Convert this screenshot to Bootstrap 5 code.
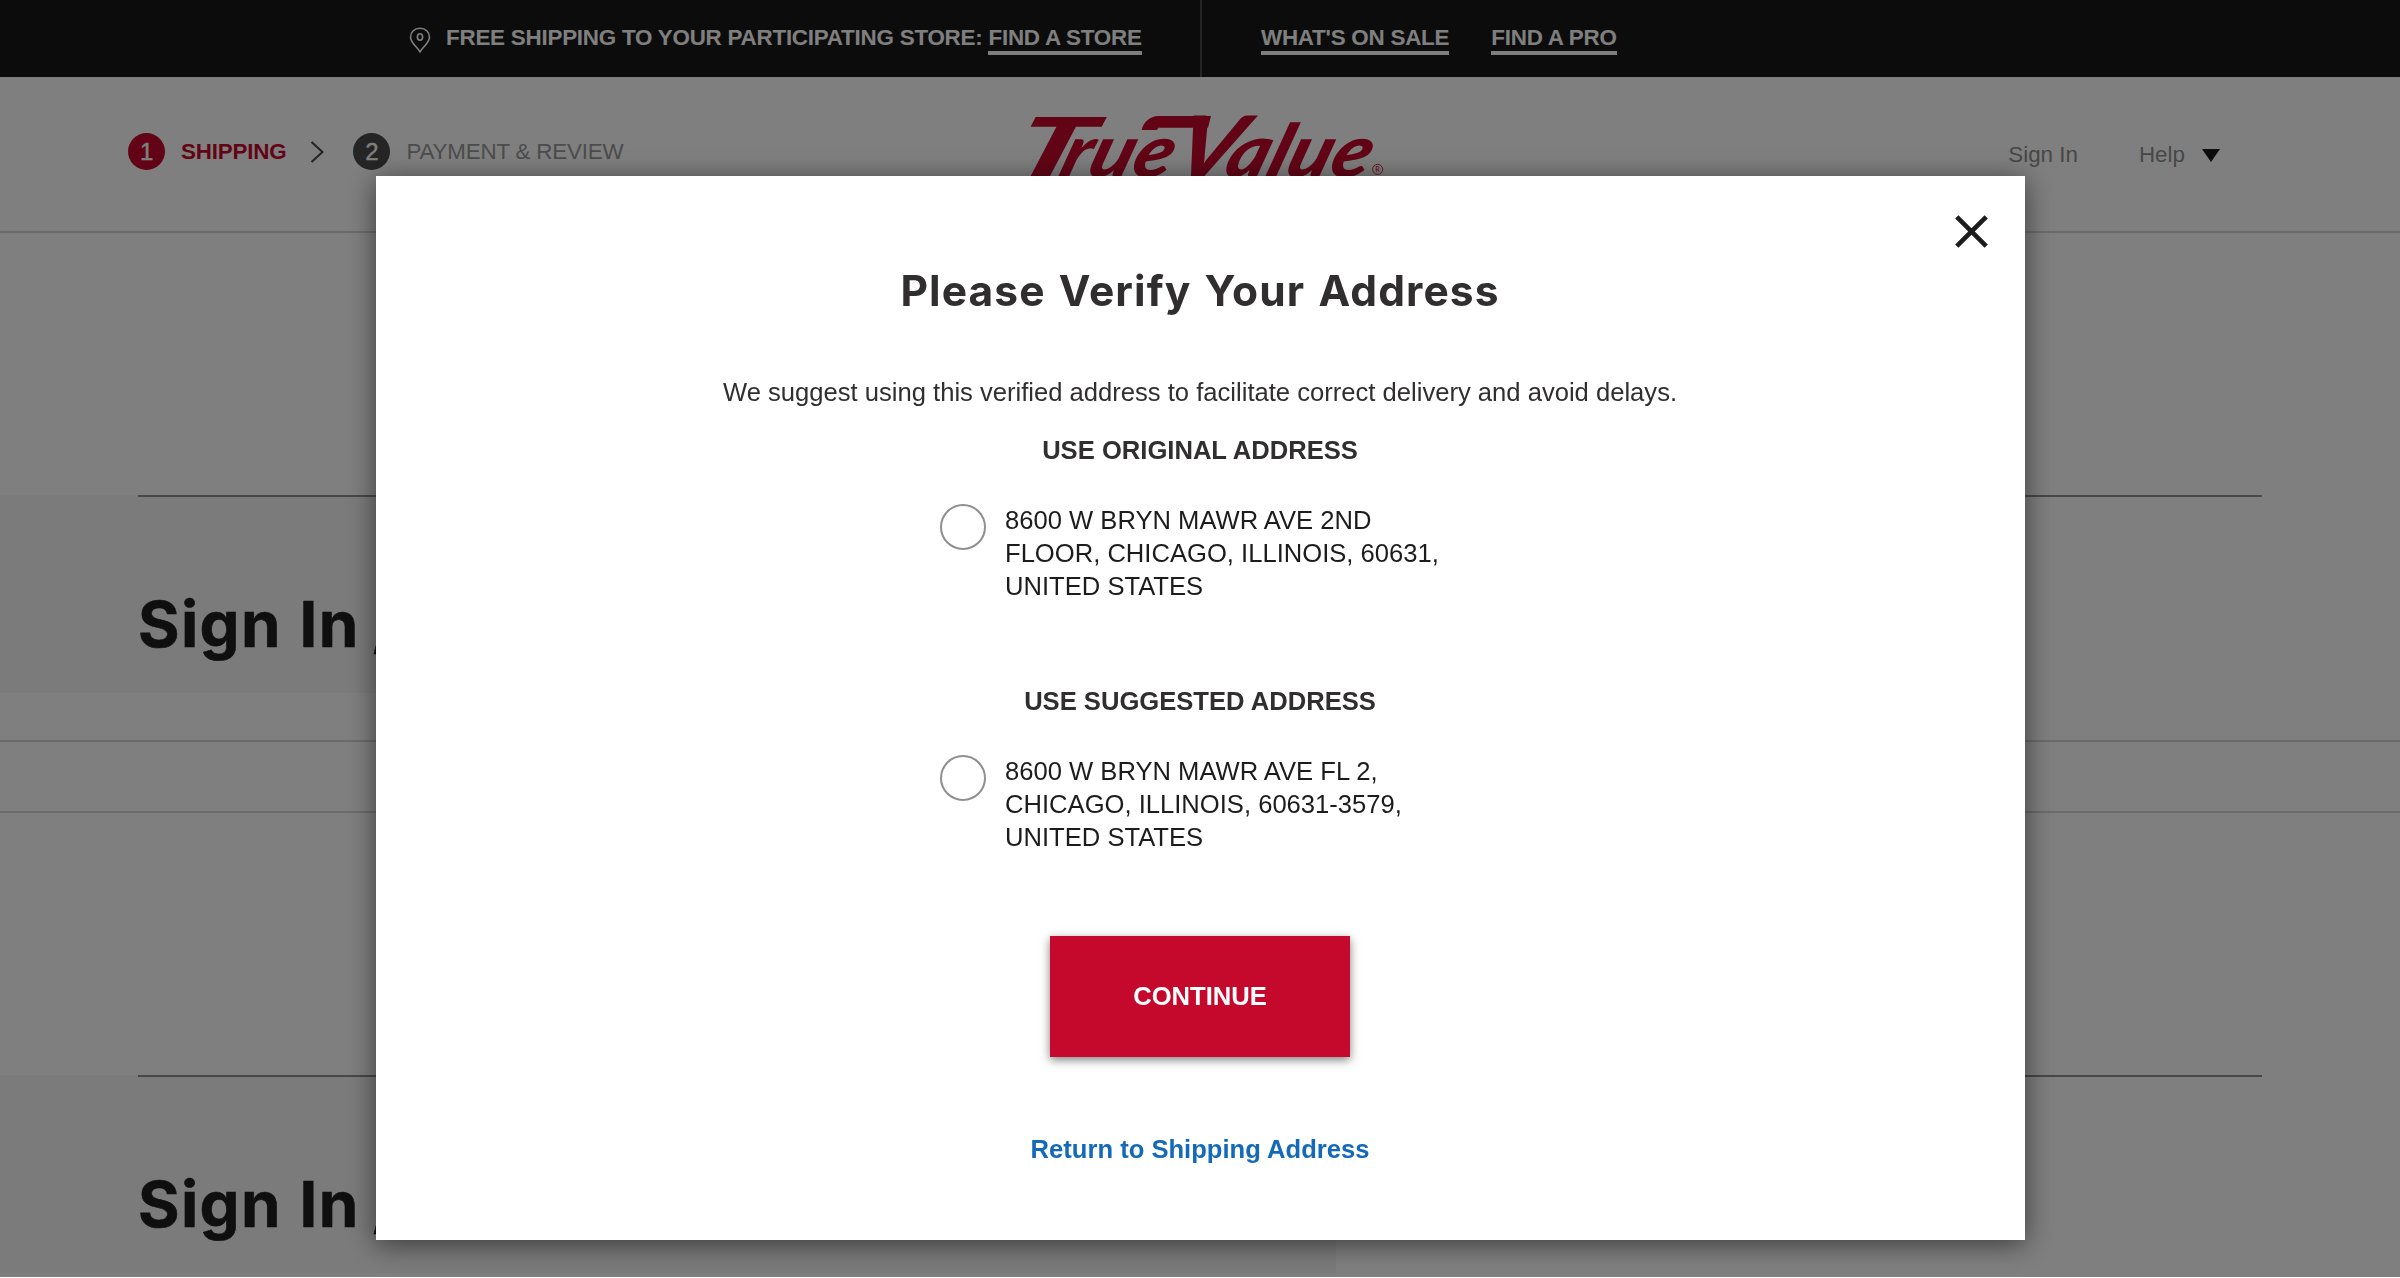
<!DOCTYPE html>
<html lang="en">
<head>
<meta charset="utf-8">
<meta name="viewport" content="width=device-width, initial-scale=1">
<title>Please Verify Your Address</title>
<link href="https://cdn.jsdelivr.net/npm/bootstrap@5.3.0/dist/css/bootstrap.min.css" rel="stylesheet">
<style>
  html, body { height: 1278px; overflow: hidden; }
  body { font-family: "Liberation Sans", Arial, sans-serif; background: #fff; color: #1e1e1e; line-height: 1; }
  a { color: inherit; text-decoration: none; }

  .promo-bar { height: 77px; background: #181818; color: #fff; font-size: 22.4px; font-weight: 700; letter-spacing: -.23px; }
  .promo-half { width: 1200px; height: 77px; padding-top: 26px; line-height: 24px; white-space: nowrap; }
  .promo-store { padding-left: 409px; }
  .promo-store .promo-link { margin-left: 6px; }
  .promo-links { padding-left: 59px; border-left: 2px solid #4a4a4a; }
  .promo-links .promo-link + .promo-link { margin-left: 42px; }
  .promo-link { display: inline-block; height: 29px; border-bottom: 4px solid #fff; }
  .pin { width: 22px; height: 26px; margin: 1px 15px 0 0; }

  .checkout-head { height: 156px; border-bottom: 2px solid #d6d6d6; }
  .steps { width: 1010px; padding: 56px 0 0 128px; font-size: 22.4px; letter-spacing: -.2px; }
  .step-num { width: 37px; height: 37px; color: #fff; font-size: 24px; -webkit-text-stroke: .4px #fff; }
  .step-one { background: #c5092d; }
  .step-two { background: #4a4a4a; }
  .step-label { margin-left: 16px; padding-top: 1px; color: #999; }
  .step-label.current { color: #c5092d; font-weight: 700; }
  .chevron { margin: 0 29px 0 24px; }
  .brand-mark { width: 390px; height: 100px; margin-top: 13px; }
  .account-links { padding: 67px 180px 0 0; font-size: 22.4px; color: #8f8f8f; gap: 61px; }
  .caret-down { margin-left: 17px; }

  .page-spacer { height: 262px; }
  .grey-panel { height: 198px; background: linear-gradient(to right, #f6f6f6 1336px, #fff 1336px); }
  .panel-rule { margin: 0 138px; border-top: 2px solid #909090; }
  .panel-title { font-family: Inter, Lato, sans-serif; font-weight: 700; font-size: 63.5px; line-height: 76px; letter-spacing: 1.4px; word-spacing: 1px; -webkit-text-stroke: .6px #1e1e1e; padding-top: 89px; margin: 0; }
  .title-slash { margin-left: -4px; }
  .gap-a { height: 47px; }
  .gap-b { height: 73px; border-top: 2px solid #d6d6d6; border-bottom: 2px solid #d6d6d6; }
  .gap-c { height: 262px; }

  .dim { height: 1277px; background: #000; }
  .verify-dialog { width: 1649px; max-width: none; margin: 176px auto 0; }
  .verify-box { height: 1064px; border: 0; border-radius: 0; box-shadow: 0 4px 26px rgba(0,0,0,.55); color: #302e2e; font-size: 25.6px; }
  .close-x { top: 39px; right: 37px; width: 33px; height: 33px; padding: 0; border: 0; background: none; }
  .verify-title { font-family: Inter, Lato, sans-serif; font-weight: 700; font-size: 42.5px; line-height: 50px; letter-spacing: 1.1px; word-spacing: 2px; margin: 90px 0 0; }
  .verify-text { line-height: 30px; margin: 61px 0 0; }
  .choice-title { font-size: 25.6px; font-weight: 700; line-height: 30px; margin: 28px 0 0; }
  .choice { width: 520px; margin: 39px auto 0; gap: 19px; color: #1c1c1c; line-height: 33px; }
  .choice .form-check-input { width: 46px; height: 46px; margin: 0; border: 2px solid #8f8f8f; flex: none; }
  .second-title { margin-top: 83px; }
  .btn-continue { width: 300px; height: 121px; margin-top: 82px; border: 0; border-radius: 0; background: #c5092d; color: #fff; font-size: 25.6px; font-weight: 700; box-shadow: 0 3px 9px rgba(0,0,0,.5); }
  .back-link { color: #146ab8; font-weight: 700; line-height: 30px; margin-top: 77px; }
</style>
<script src="https://cdn.jsdelivr.net/npm/bootstrap@5.3.0/dist/js/bootstrap.bundle.min.js"></script>
</head>
<body>
<header>
  <div class="promo-bar d-flex">
    <div class="promo-half promo-store d-flex">
      <svg class="pin" viewBox="0 0 22 26" fill="none" stroke="#fff" stroke-width="1.6"><path d="M11 24.800C8.500 20.500 1.500 15.500 1.500 10.200C1.500 5 5.600 1.200 11 1.200S20.500 5 20.500 10.200C20.500 15.500 13.500 20.500 11 24.800Z"/><ellipse cx="11" cy="10" rx="2.600" ry="3.200"/></svg>
      <span>FREE SHIPPING TO YOUR PARTICIPATING STORE:</span>
      <a href="#" class="promo-link">FIND A STORE</a>
    </div>
    <div class="promo-half promo-links d-flex">
      <a href="#" class="promo-link">WHAT'S ON SALE</a>
      <a href="#" class="promo-link">FIND A PRO</a>
    </div>
  </div>
  <div class="checkout-head d-flex">
    <div class="steps d-flex align-items-start">
      <div class="d-flex align-items-center">
        <span class="step-num step-one rounded-circle d-flex align-items-center justify-content-center">1</span>
        <span class="step-label current">SHIPPING</span>
        <svg class="chevron" width="14" height="22" viewBox="0 0 14 22" fill="none" stroke="#4a4a4a" stroke-width="2.200"><path d="M1.500 1L12.500 11L1.500 21"/></svg>
        <span class="step-num step-two rounded-circle d-flex align-items-center justify-content-center">2</span>
        <span class="step-label">PAYMENT &amp; REVIEW</span>
      </div>
    </div>
    <svg class="brand-mark" viewBox="0 0 1170 300" fill="#c5092d" font-family="Lato, sans-serif" font-weight="900" font-style="italic" role="img">
      <g transform="translate(0 262) skewX(-18)">
        <text x="-8" y="0" font-size="248" textLength="226" lengthAdjust="spacingAndGlyphs">T</text>
        <text x="140" y="0" font-size="220" textLength="332" lengthAdjust="spacingAndGlyphs">rue</text>
        <text x="478" y="0" font-size="254" textLength="190" lengthAdjust="spacingAndGlyphs">V</text>
        <text x="636" y="0" font-size="220" textLength="430" lengthAdjust="spacingAndGlyphs">alue</text>
      </g>
      <path d="M395 120C399 98 420 78 445 78H603L594 113H445L441 120Z"/>
      <circle cx="1103" cy="238" r="15" fill="none" stroke="#c5092d" stroke-width="2.500"/>
      <text x="1103" y="246" font-size="22" font-weight="400" font-style="normal" text-anchor="middle">R</text>
    </svg>
    <nav class="account-links d-flex flex-fill justify-content-end align-items-start">
      <a href="#">Sign In</a>
      <a href="#" class="d-flex align-items-center">Help
        <svg width="18" height="13" viewBox="0 0 18 13" class="caret-down"><path d="M0 0H18L9 13Z" fill="#181818"/></svg></a>
    </nav>
  </div>
</header>
<main>
  <div class="page-spacer"></div>
  <section class="grey-panel"><div class="panel-rule"><h1 class="panel-title">Sign In <span class="title-slash">/</span></h1></div></section>
  <div class="gap-a"></div>
  <div class="gap-b"></div>
  <div class="gap-c"></div>
  <section class="grey-panel"><div class="panel-rule"><h1 class="panel-title">Sign In <span class="title-slash">/</span></h1></div></section>
</main>

<div class="modal-backdrop show dim"></div>
<div class="modal d-block overflow-hidden" role="dialog">
  <div class="modal-dialog verify-dialog">
    <div class="modal-content verify-box text-center align-items-center">
      <button type="button" class="close-x position-absolute" aria-label="Close"><svg class="d-block" width="33" height="33" viewBox="0 0 33 33" stroke="#1c1c1c" stroke-width="4.600"><path d="M1.800 1.800L31.200 31.200M31.200 1.800L1.800 31.200"/></svg></button>
      <h2 class="verify-title">Please Verify Your Address</h2>
      <p class="verify-text">We suggest using this verified address to facilitate correct delivery and avoid delays.</p>
      <h3 class="choice-title">USE ORIGINAL ADDRESS</h3>
      <label class="choice d-flex align-items-start text-start">
        <input class="form-check-input rounded-circle" type="radio" name="address">
        <span>8600 W BRYN MAWR AVE 2ND<br>FLOOR, CHICAGO, ILLINOIS, 60631,<br>UNITED STATES</span>
      </label>
      <h3 class="choice-title second-title">USE SUGGESTED ADDRESS</h3>
      <label class="choice d-flex align-items-start text-start">
        <input class="form-check-input rounded-circle" type="radio" name="address">
        <span>8600 W BRYN MAWR AVE FL 2,<br>CHICAGO, ILLINOIS, 60631-3579,<br>UNITED STATES</span>
      </label>
      <button type="button" class="btn btn-continue">CONTINUE</button>
      <a href="#" class="back-link">Return to Shipping Address</a>
    </div>
  </div>
</div>
</body>
</html>
